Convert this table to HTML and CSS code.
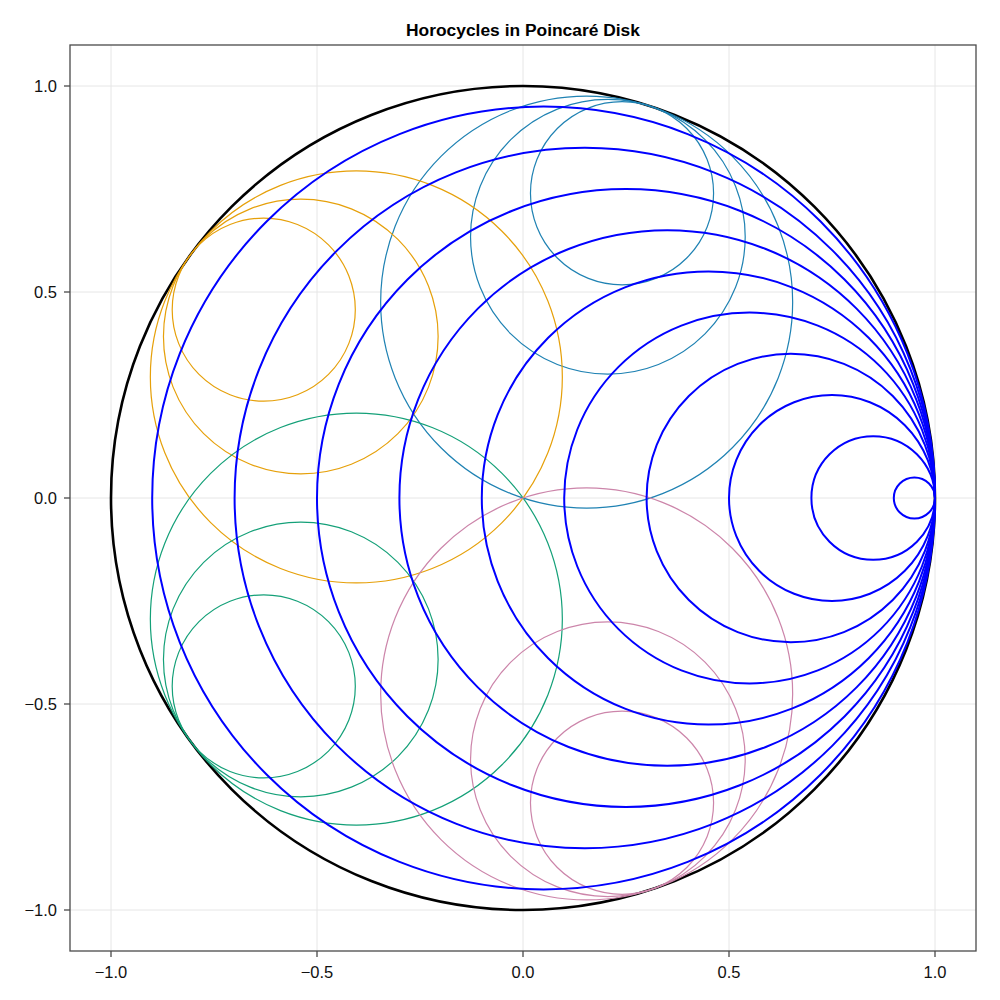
FILE: index.html
```html
<!DOCTYPE html>
<html>
<head>
<meta charset="utf-8">
<link rel="stylesheet" href="styles.css">
</head>
<body>
<div class="figure">
<svg class="plot" width="1000" height="1000" viewBox="0 0 1000 1000">
  <text class="title" x="523" y="36">Horocycles in Poincaré Disk</text>
  <g class="grid">
    <line x1="111" y1="45" x2="111" y2="951"/>
    <line x1="317" y1="45" x2="317" y2="951"/>
    <line x1="523" y1="45" x2="523" y2="951"/>
    <line x1="729" y1="45" x2="729" y2="951"/>
    <line x1="935" y1="45" x2="935" y2="951"/>
    <line x1="70" y1="86" x2="976" y2="86"/>
    <line x1="70" y1="292" x2="976" y2="292"/>
    <line x1="70" y1="498" x2="976" y2="498"/>
    <line x1="70" y1="704" x2="976" y2="704"/>
    <line x1="70" y1="910" x2="976" y2="910"/>
  </g>
  <g transform="translate(523 498) scale(412 -412)">
    <circle class="unit" cx="0" cy="0" r="1"/>
    <g class="c-teal">
      <circle cx="0.15451" cy="0.47553" r="0.5"/>
      <circle cx="0.20601" cy="0.63404" r="0.33333"/>
      <circle cx="0.24035" cy="0.73972" r="0.22222"/>
    </g>
    <g class="c-orange">
      <circle cx="-0.40451" cy="0.29389" r="0.5"/>
      <circle cx="-0.53935" cy="0.39186" r="0.33333"/>
      <circle cx="-0.62924" cy="0.45717" r="0.22222"/>
    </g>
    <g class="c-green">
      <circle cx="-0.40451" cy="-0.29389" r="0.5"/>
      <circle cx="-0.53935" cy="-0.39186" r="0.33333"/>
      <circle cx="-0.62924" cy="-0.45717" r="0.22222"/>
    </g>
    <g class="c-pink">
      <circle cx="0.15451" cy="-0.47553" r="0.5"/>
      <circle cx="0.20601" cy="-0.63404" r="0.33333"/>
      <circle cx="0.24035" cy="-0.73972" r="0.22222"/>
    </g>
    <g class="c-blue">
      <circle cx="0.95" cy="0" r="0.05"/>
      <circle cx="0.85" cy="0" r="0.15"/>
      <circle cx="0.75" cy="0" r="0.25"/>
      <circle cx="0.65" cy="0" r="0.35"/>
      <circle cx="0.55" cy="0" r="0.45"/>
      <circle cx="0.45" cy="0" r="0.55"/>
      <circle cx="0.35" cy="0" r="0.65"/>
      <circle cx="0.25" cy="0" r="0.75"/>
      <circle cx="0.15" cy="0" r="0.85"/>
      <circle cx="0.05" cy="0" r="0.95"/>
    </g>
  </g>
  <rect class="frame" x="70" y="45" width="906" height="906"/>
  <g class="ticks">
    <line x1="111" y1="951" x2="111" y2="957"/>
    <line x1="317" y1="951" x2="317" y2="957"/>
    <line x1="523" y1="951" x2="523" y2="957"/>
    <line x1="729" y1="951" x2="729" y2="957"/>
    <line x1="935" y1="951" x2="935" y2="957"/>
    <line x1="64" y1="86" x2="70" y2="86"/>
    <line x1="64" y1="292" x2="70" y2="292"/>
    <line x1="64" y1="498" x2="70" y2="498"/>
    <line x1="64" y1="704" x2="70" y2="704"/>
    <line x1="64" y1="910" x2="70" y2="910"/>
  </g>
  <g class="xlabels">
    <text x="111" y="978">−1.0</text>
    <text x="317" y="978">−0.5</text>
    <text x="523" y="978">0.0</text>
    <text x="729" y="978">0.5</text>
    <text x="935" y="978">1.0</text>
  </g>
  <g class="ylabels">
    <text x="57" y="92">1.0</text>
    <text x="57" y="298">0.5</text>
    <text x="57" y="504">0.0</text>
    <text x="57" y="710">−0.5</text>
    <text x="57" y="916">−1.0</text>
  </g>
</svg>
</div>
</body>
</html>
```
FILE: styles.css
```css
html, body {
  margin: 0;
  padding: 0;
  background: #ffffff;
}
.figure {
  width: 1000px;
  height: 1000px;
}
.plot {
  display: block;
  font-family: "Liberation Sans", Arial, sans-serif;
}
.title {
  font-size: 17.4px;
  font-weight: bold;
  text-anchor: middle;
  fill: #000000;
}
.grid line {
  stroke: #e6e6e6;
  stroke-width: 1;
}
.frame {
  fill: none;
  stroke: #4a4a4a;
  stroke-width: 1.3;
}
.ticks line {
  stroke: #4a4a4a;
  stroke-width: 1.3;
}
.xlabels text {
  font-size: 16.5px;
  text-anchor: middle;
  fill: #111111;
}
.ylabels text {
  font-size: 16.5px;
  text-anchor: end;
  fill: #111111;
}
circle {
  fill: none;
  vector-effect: non-scaling-stroke;
}
.unit {
  stroke: #000000;
  stroke-width: 2.6;
}
.c-blue circle {
  stroke: #0000ff;
  stroke-width: 2;
}
.c-teal circle {
  stroke: #1f82b3;
  stroke-width: 1.2;
}
.c-orange circle {
  stroke: #e6a00a;
  stroke-width: 1.2;
}
.c-green circle {
  stroke: #14a078;
  stroke-width: 1.2;
}
.c-pink circle {
  stroke: #cc85aa;
  stroke-width: 1.2;
}
```
